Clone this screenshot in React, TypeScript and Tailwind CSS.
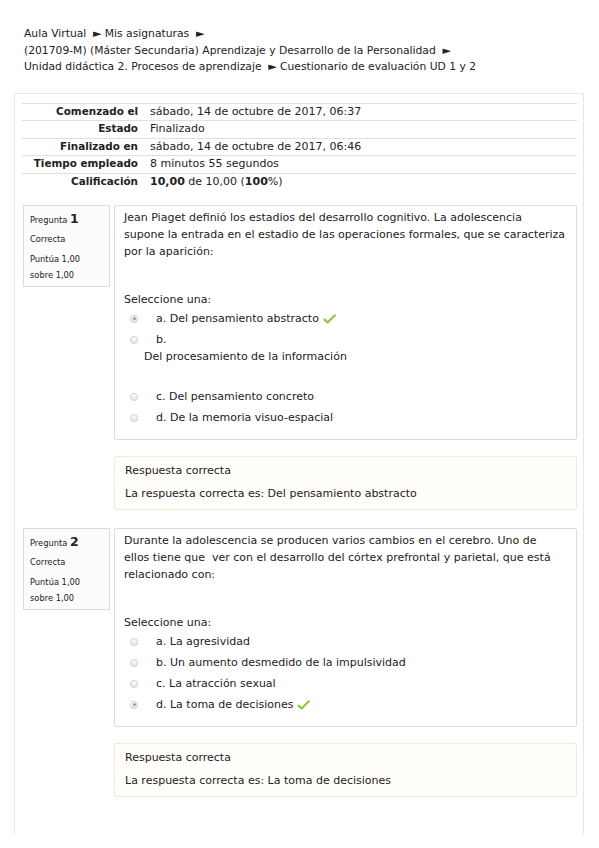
import React from "react";

function Radio({ checked }: { checked?: boolean }) {
  return (
    <span className="flex h-[8px] w-[8px] shrink-0 items-center justify-center rounded-full border border-[#cfcfcf] bg-gradient-to-b from-[#ffffff] to-[#e6e6e6]">
      {checked ? <span className="h-[3px] w-[3px] rounded-full bg-[#9a9a9a]" /> : null}
    </span>
  );
}

function Tick() {
  return (
    <svg width="13" height="10" viewBox="0 0 13 10" className="ml-[4px] inline-block">
      <path d="M1.5 5.6 L4.6 8.4 L11.8 1.3" fill="none" stroke="#8cc63f" strokeWidth="2.1" strokeLinecap="round" strokeLinejoin="round" />
    </svg>
  );
}

type Opt = { letter: string; text: string; checked?: boolean; block?: boolean };

function Option({ o }: { o: Opt }) {
  if (o.block) {
    return (
      <div className="py-[2px] leading-[17px]">
        <div className="flex items-center">
          <Radio checked={o.checked} />
          <span className="ml-[18px]">{o.letter}</span>
        </div>
        <p className="ml-[14px] mb-[19px]">{o.text}</p>
      </div>
    );
  }
  return (
    <div className="flex items-center py-[2px] leading-[17px]">
      <Radio checked={o.checked} />
      <span className="ml-[18px] flex items-center">
        {o.letter} {o.text}
        {o.checked ? <Tick /> : null}
      </span>
    </div>
  );
}

function Question({
  num,
  text,
  options,
  answer,
}: {
  num: number;
  text: string[];
  options: Opt[];
  answer: string;
}) {
  return (
    <div className="flex">
      <div className="w-[87px] h-[82px] shrink-0 border border-[#dcdcdc] bg-[#fcfcfc] pl-[6px] pt-[4px]">
        <div className="leading-[18px] text-[8.3px]">
          Pregunta <span className="text-[12.5px] font-bold">{num}</span>
        </div>
        <div className="mt-[2px] leading-[16px] text-[8.3px]">Correcta</div>
        <div className="mt-[4px] leading-[16px] text-[8.3px]">
          Puntúa 1,00
          <br />
          sobre 1,00
        </div>
      </div>
      <div className="ml-[4px] flex-1">
        <div className="rounded-[2px] border border-[#dcdcdc] bg-[#ffffff] pl-[9px] pr-[8px] pt-[3px] pb-[11px]">
          <p className="leading-[17px]">
            {text.map((t, i) => (
              <React.Fragment key={i}>
                {t}
                {i < text.length - 1 ? <br /> : null}
              </React.Fragment>
            ))}
          </p>
          <p className="mt-[31px] leading-[17px]">Seleccione una:</p>
          <div className="ml-[6px]">
            {options.map((o) => (
              <Option key={o.letter} o={o} />
            ))}
          </div>
        </div>
        <div className="mt-[16px] rounded-[2px] border border-[#fbe9cf] bg-[#fffefb] pl-[10px] pt-[5px] pb-[7px]">
          <p className="leading-[17px]">Respuesta correcta</p>
          <p className="mt-[6px] leading-[17px]">La respuesta correcta es: {answer}</p>
        </div>
      </div>
    </div>
  );
}

export default function App() {
  const rows: [string, React.ReactNode][] = [
    ["Comenzado el", "sábado, 14 de octubre de 2017, 06:37"],
    ["Estado", "Finalizado"],
    ["Finalizado en", "sábado, 14 de octubre de 2017, 06:46"],
    ["Tiempo empleado", "8 minutos 55 segundos"],
    [
      "Calificación",
      <>
        <b>10,00</b> de 10,00 (<b>100</b>%)
      </>,
    ],
  ];
  return (
    <div className="h-[848px] w-[599px] overflow-hidden bg-white font-['DejaVu_Sans',sans-serif] text-[11px] text-[#222]">
      <div className="pl-[24px] pt-[26px] text-[10.75px] leading-[16.5px]">
        <div>Aula Virtual&nbsp; ► Mis asignaturas&nbsp; ►</div>
        <div>(201709-M) (Máster Secundaria) Aprendizaje y Desarrollo de la Personalidad&nbsp; ►</div>
        <div>Unidad didáctica 2. Procesos de aprendizaje&nbsp; ► Cuestionario de evaluación UD 1 y 2</div>
      </div>
      <div className="ml-[14px] mt-[17px] h-[741px] w-[570px] border-l border-r border-t border-[#e6e6e6] pl-[7px] pr-[6px] pt-[9px]">
        <div>
          {rows.map(([k, v]) => (
            <div key={k} className="flex h-[17.5px] items-center border-t border-[#e0e0e0]">
              <div className="w-[116px] text-right text-[10.4px] font-bold">{k}</div>
              <div className="pl-[12px]">{v}</div>
            </div>
          ))}
        </div>
        <div className="mt-[15px] flex flex-col gap-[18px] pl-[1px]">
          <Question
            num={1}
            text={[
              "Jean Piaget definió los estadios del desarrollo cognitivo. La adolescencia",
              "supone la entrada en el estadio de las operaciones formales, que se caracteriza",
              "por la aparición:",
            ]}
            options={[
              { letter: "a.", text: "Del pensamiento abstracto", checked: true },
              { letter: "b.", text: "Del procesamiento de la información", block: true },
              { letter: "c.", text: "Del pensamiento concreto" },
              { letter: "d.", text: "De la memoria visuo-espacial" },
            ]}
            answer="Del pensamiento abstracto"
          />
          <Question
            num={2}
            text={[
              "Durante la adolescencia se producen varios cambios en el cerebro. Uno de",
              "ellos tiene que\u00a0 ver con el desarrollo del córtex prefrontal y parietal, que está",
              "relacionado con:",
            ]}
            options={[
              { letter: "a.", text: "La agresividad" },
              { letter: "b.", text: "Un aumento desmedido de la impulsividad" },
              { letter: "c.", text: "La atracción sexual" },
              { letter: "d.", text: "La toma de decisiones", checked: true },
            ]}
            answer="La toma de decisiones"
          />
        </div>
      </div>
    </div>
  );
}
